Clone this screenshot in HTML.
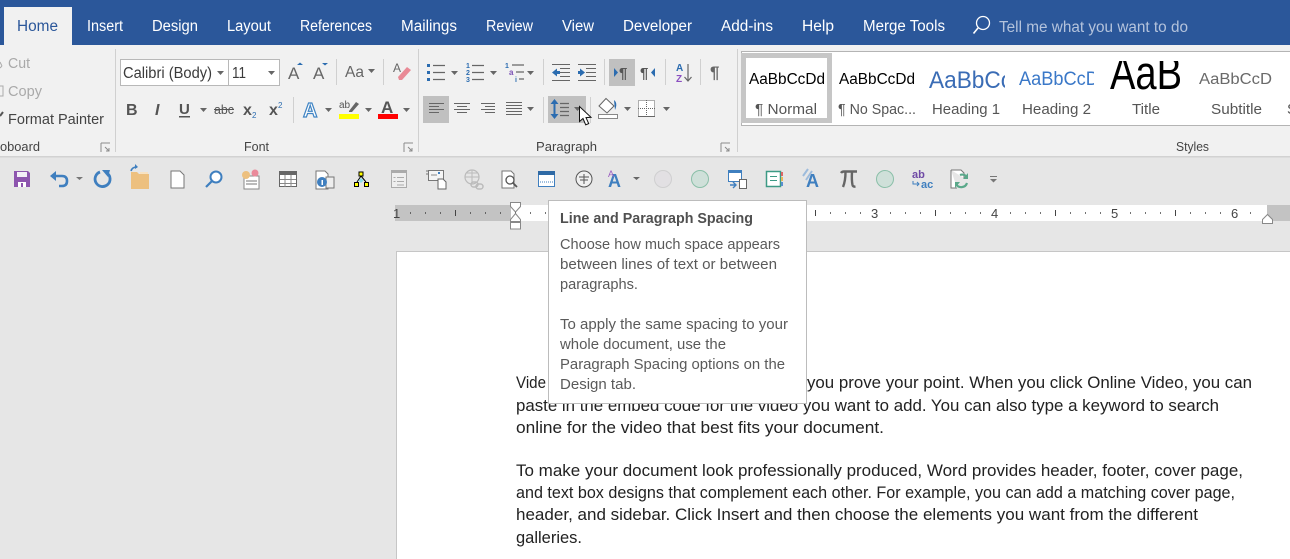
<!DOCTYPE html>
<html><head><meta charset="utf-8"><title>Word</title>
<style>
html,body{margin:0;padding:0;width:1290px;height:559px;overflow:hidden;background:#e6e6e6}
svg{display:block}
text{font-family:"Liberation Sans","DejaVu Sans",sans-serif;font-size:14px;fill:#444}
.tab{font-size:15.5px;fill:#fff}
.rb{font-size:15px;fill:#444}
.lb{font-size:13px;fill:#444}
.tt{font-size:15px;fill:#5a5a5a}
.bd{font-size:16.5px;fill:#222}
.num{font-size:13px;fill:#444}
</style></head><body>
<svg width="1290" height="559" viewBox="0 0 1290 559" xmlns="http://www.w3.org/2000/svg">
<defs>
<clipPath id="c1"><rect x="925" y="58" width="80" height="40"/></clipPath>
<clipPath id="c2"><rect x="1015" y="58" width="79" height="40"/></clipPath>
<clipPath id="c3"><rect x="1100" y="61" width="90" height="40"/></clipPath>
<path id="ar" d="M0 0h7l-3.500 4z" fill="#666"/>
</defs>
<rect width="1290" height="559" fill="#e6e6e6"/>
<!-- title/tab bar -->
<rect width="1290" height="45" fill="#2b579a"/>
<rect y="45" width="1290" height="111" fill="#f1f1f1"/>
<rect y="156" width="1290" height="1.500" fill="#d2d2d2"/>
<rect x="4" y="7" width="68" height="38" fill="#f1f1f1"/>
<text x="17" y="31" class="tab" style="fill:#2b579a" textLength="41" lengthAdjust="spacingAndGlyphs">Home</text>
<text x="87" y="31" class="tab" textLength="36" lengthAdjust="spacingAndGlyphs">Insert</text>
<text x="152" y="31" class="tab" textLength="46" lengthAdjust="spacingAndGlyphs">Design</text>
<text x="227" y="31" class="tab" textLength="44" lengthAdjust="spacingAndGlyphs">Layout</text>
<text x="300" y="31" class="tab" textLength="72" lengthAdjust="spacingAndGlyphs">References</text>
<text x="401" y="31" class="tab" textLength="56" lengthAdjust="spacingAndGlyphs">Mailings</text>
<text x="486" y="31" class="tab" textLength="47" lengthAdjust="spacingAndGlyphs">Review</text>
<text x="562" y="31" class="tab" textLength="32" lengthAdjust="spacingAndGlyphs">View</text>
<text x="623" y="31" class="tab" textLength="69" lengthAdjust="spacingAndGlyphs">Developer</text>
<text x="721" y="31" class="tab" textLength="52" lengthAdjust="spacingAndGlyphs">Add-ins</text>
<text x="802" y="31" class="tab" textLength="32" lengthAdjust="spacingAndGlyphs">Help</text>
<text x="863" y="31" class="tab" textLength="82" lengthAdjust="spacingAndGlyphs">Merge Tools</text>
<circle cx="983" cy="23" r="6.500" fill="none" stroke="#fff" stroke-width="1.300"/>
<path d="M978 28l-4.500 5.500" stroke="#fff" stroke-width="1.600" fill="none"/>
<text x="999" y="32" class="tab" style="fill:#b4c3dc" textLength="189" lengthAdjust="spacingAndGlyphs">Tell me what you want to do</text>

<!-- separators -->
<g fill="#d0d0d0"><rect x="115" y="49" width="1" height="103"/><rect x="418" y="49" width="1" height="103"/><rect x="737" y="49" width="1" height="103"/></g>

<!-- clipboard -->
<path d="M0 62l2 4M0 68l2-2" stroke="#aaa" fill="none"/>
<text x="8" y="68" class="rb" style="fill:#a9a9a9" textLength="22" lengthAdjust="spacingAndGlyphs">Cut</text>
<path d="M0 86h3v10H0" stroke="#aaa" fill="none"/>
<text x="8" y="96" class="rb" style="fill:#a9a9a9" textLength="34" lengthAdjust="spacingAndGlyphs">Copy</text>
<path d="M0 116l3-4" stroke="#555" stroke-width="2" fill="none"/>
<text x="8" y="124" class="rb" textLength="96" lengthAdjust="spacingAndGlyphs">Format Painter</text>
<text x="0" y="151" class="lb" textLength="40" lengthAdjust="spacingAndGlyphs">oboard</text>
<path d="M101 143h9M101 143v9M105 147l4 4M109 148v3h-3" stroke="#8a8a8a" fill="none"/>

<!-- font group -->
<rect x="120.500" y="59.500" width="108" height="26" fill="#fff" stroke="#b8b8b8"/>
<rect x="228.500" y="59.500" width="51" height="26" fill="#fff" stroke="#b8b8b8"/>
<text x="123" y="78" style="font-size:15.500px;fill:#3b3b3b" textLength="89" lengthAdjust="spacingAndGlyphs">Calibri (Body)</text>
<text x="232" y="78" style="font-size:15.500px;fill:#3b3b3b" textLength="14" lengthAdjust="spacingAndGlyphs">11</text>
<use href="#ar" x="217" y="71"/><use href="#ar" x="268" y="71"/>
<text x="288" y="79" style="font-size:17px;fill:#666">A</text><path d="M297 65l3-2.500 3 2.500z" fill="#2b6cb0"/>
<text x="313" y="79" style="font-size:17px;fill:#666">A</text><path d="M322 63h6l-3 2.500z" fill="#2b6cb0"/>
<rect x="336" y="59" width="1" height="26" fill="#d0d0d0"/>
<text x="345" y="77" style="font-size:16px;fill:#666" textLength="19" lengthAdjust="spacingAndGlyphs">Aa</text><use href="#ar" x="368" y="69"/>
<rect x="383" y="59" width="1" height="26" fill="#d0d0d0"/>
<text x="393" y="72" style="font-size:12px;fill:#666">A</text>
<path d="M398 77l9-10 4 3-9 10h-3z" fill="#e98a96"/>

<text x="126" y="115" style="font-size:16px;font-weight:bold;fill:#555">B</text>
<text x="155" y="115" style="font-size:16px;font-style:italic;font-weight:bold;fill:#555">I</text>
<text x="179" y="114" style="font-size:15px;font-weight:bold;fill:#555">U</text><rect x="179" y="116" width="11" height="1.500" fill="#555"/>
<use href="#ar" x="200" y="108"/>
<text x="214" y="114" style="font-size:13px;fill:#555" textLength="20" lengthAdjust="spacingAndGlyphs">abc</text><rect x="214" y="109" width="20" height="1" fill="#555"/>
<text x="243" y="115" style="font-size:16px;font-weight:bold;fill:#555">x</text><text x="252" y="118" style="font-size:8px;fill:#2b6cb0">2</text>
<text x="269" y="115" style="font-size:16px;font-weight:bold;fill:#555">x</text><text x="278" y="108" style="font-size:8px;fill:#2b6cb0">2</text>
<rect x="293" y="97" width="1" height="26" fill="#d0d0d0"/>
<text x="303" y="117" style="font-size:20px;font-weight:bold;fill:#fff;stroke:#3f84c4;stroke-width:1.200">A</text>
<use href="#ar" x="325" y="108"/>
<text x="339" y="108" style="font-size:10px;fill:#555">ab</text>
<path d="M349 111l7-9 3 2-7 8h-3z" fill="#666"/>
<rect x="339" y="114" width="20" height="5" fill="#ff0"/>
<use href="#ar" x="365" y="108"/>
<text x="381" y="113" style="font-size:17px;fill:#555;font-weight:bold">A</text>
<rect x="378" y="114" width="20" height="5" fill="#f00"/>
<use href="#ar" x="403" y="108"/>
<text x="244" y="151" class="lb" textLength="25" lengthAdjust="spacingAndGlyphs">Font</text>
<path d="M404 143h9M404 143v9M408 147l4 4M412 148v3h-3" stroke="#8a8a8a" fill="none"/>

<!-- paragraph -->
<rect x="609" y="59" width="26" height="27" fill="#c0c0c0"/>
<rect x="423" y="96" width="26" height="27" fill="#c0c0c0"/>
<rect x="548" y="96" width="38" height="27" fill="#c0c0c0"/>
<g fill="#d0d0d0"><rect x="543" y="59" width="1" height="26"/><rect x="604" y="59" width="1" height="26"/><rect x="665" y="59" width="1" height="26"/><rect x="700" y="59" width="1" height="26"/><rect x="543" y="97" width="1" height="26"/><rect x="590" y="97" width="1" height="26"/></g>
<!-- bullets -->
<g fill="#2b6cb0"><rect x="427" y="64" width="3" height="3"/><rect x="427" y="71" width="3" height="3"/><rect x="427" y="78" width="3" height="3"/></g>
<path d="M433 65.500h12M433 72.500h12M433 79.500h12" stroke="#666" stroke-width="1.200"/>
<use href="#ar" x="451" y="71"/>
<text x="466" y="68" style="font-size:7px;fill:#2b6cb0;font-weight:bold">1</text><text x="466" y="75" style="font-size:7px;fill:#2b6cb0;font-weight:bold">2</text><text x="466" y="82" style="font-size:7px;fill:#2b6cb0;font-weight:bold">3</text>
<path d="M472 65.500h12M472 72.500h12M472 79.500h12" stroke="#666" stroke-width="1.200"/>
<use href="#ar" x="490" y="71"/>
<text x="505" y="68" style="font-size:7px;fill:#2b6cb0;font-weight:bold">1</text>
<text x="509" y="75" style="font-size:8px;fill:#7a4fb5;font-weight:bold">a</text>
<text x="515" y="82" style="font-size:7px;fill:#2b6cb0;font-weight:bold">i</text>
<path d="M512 65h12M516 72h8M519 79h5" stroke="#666" stroke-width="1.200"/>
<use href="#ar" x="527" y="71"/>
<!-- outdent / indent -->
<path d="M552 64.500h18M560 68.500h10M560 72.500h10M560 76.500h10M552 80.500h18" stroke="#666" stroke-width="1"/>
<path d="M552 72.500l5-4v2.500h3v3h-3v2.500z" fill="#2b6cb0"/>
<path d="M578 64.500h18M586 68.500h10M586 72.500h10M586 76.500h10M578 80.500h18" stroke="#666" stroke-width="1"/>
<path d="M585 72.500l-5-4v2.500h-2v3h2v2.500z" fill="#2b6cb0"/>
<!-- ltr/rtl -->
<path d="M614 68v9l4-4.500z" fill="#2b6cb0"/>
<text x="619" y="78" style="font-size:15px;fill:#555;font-weight:bold">¶</text>
<text x="640" y="78" style="font-size:15px;fill:#555;font-weight:bold">¶</text>
<path d="M655 68v9l-4-4.500z" fill="#2b6cb0"/>
<!-- sort -->
<text x="676" y="71" style="font-size:10px;fill:#2b6cb0;font-weight:bold">A</text>
<text x="676" y="82" style="font-size:10px;fill:#8b4fc0;font-weight:bold">Z</text>
<path d="M688 64v17M684.500 77l3.500 4 3.500-4" stroke="#666" stroke-width="1.200" fill="none"/>
<text x="710" y="78" style="font-size:17px;fill:#666;font-weight:bold">¶</text>
<!-- align -->
<path d="M429 103.500h15M429 106.500h10M429 109.500h15M429 112.500h10" stroke="#666"/>
<path d="M454 103.500h16M457 106.500h10M454 109.500h16M457 112.500h10" stroke="#666"/>
<path d="M481 103.500h14M485 106.500h10M481 109.500h14M485 112.500h10" stroke="#666"/>
<path d="M506 102.500h16M506 105.500h16M506 108.500h16M506 111.500h16M506 114.500h16" stroke="#666"/>
<use href="#ar" x="527" y="107"/>
<!-- line spacing -->
<path d="M554.500 102v14" stroke="#2b6cb0" stroke-width="2"/><path d="M550.500 104l4-5 4 5zM550.500 114l4 5 4-5z" fill="#2b6cb0"/>
<path d="M560 103.500h9M560 107.500h9M560 111.500h9M560 115.500h9" stroke="#666" stroke-width="1.200"/>
<use href="#ar" x="574" y="107"/>
<!-- shading -->
<path d="M599 106l7-7.500 8 7.500-7 7z" fill="#fff" stroke="#666"/><path d="M614 100q4 3 1 10z" fill="#2b6cb0"/>
<rect x="598.500" y="114.500" width="19" height="4" fill="#fff" stroke="#888"/>
<use href="#ar" x="624" y="107"/>
<!-- borders -->
<rect x="638.500" y="100.500" width="16" height="16" fill="#fff" stroke="#666" stroke-dasharray="1 1"/>
<path d="M638 108.500h17M646.500 100v17" stroke="#666" stroke-dasharray="1 1"/>
<path d="M638 116.500h17" stroke="#666"/>
<use href="#ar" x="663" y="107"/>
<!-- cursor -->
<path d="M579.500 106.500v15l3.500-3 2.700 6.300 3-1.200-2.700-6 5-.3z" fill="#fff" stroke="#111" stroke-width="1"/>
<text x="536" y="151" class="lb" textLength="61" lengthAdjust="spacingAndGlyphs">Paragraph</text>
<path d="M721 143h9M721 143v9M725 147l4 4M729 148v3h-3" stroke="#8a8a8a" fill="none"/>

<!-- styles gallery -->
<rect x="741.500" y="51.500" width="560" height="74" fill="#fff" stroke="#b4b4b4"/>
<rect x="743.500" y="55.500" width="86" height="65" fill="#fff" stroke="#c6c6c6" stroke-width="5"/>
<text x="749" y="84" style="font-size:15.500px;fill:#000" textLength="76" lengthAdjust="spacingAndGlyphs">AaBbCcDd</text>
<text x="839" y="84" style="font-size:15.500px;fill:#000" textLength="76" lengthAdjust="spacingAndGlyphs">AaBbCcDd</text>
<g clip-path="url(#c1)"><text x="929" y="88" style="font-size:24px;fill:#3a6cb5" textLength="112" lengthAdjust="spacingAndGlyphs">AaBbCcDd</text></g>
<g clip-path="url(#c2)"><text x="1019" y="85" style="font-size:19px;fill:#3a78c8" textLength="90" lengthAdjust="spacingAndGlyphs">AaBbCcDd</text></g>
<g clip-path="url(#c3)"><text x="1110" y="89" style="font-size:47px;fill:#000" textLength="72" lengthAdjust="spacingAndGlyphs">AaB</text></g>
<text x="1199" y="84" style="font-size:15.500px;fill:#6a6a6a" textLength="73" lengthAdjust="spacingAndGlyphs">AaBbCcD</text>
<text x="755" y="114" class="rb" style="fill:#555" textLength="62" lengthAdjust="spacingAndGlyphs">¶ Normal</text>
<text x="838" y="114" class="rb" style="fill:#555" textLength="78" lengthAdjust="spacingAndGlyphs">¶ No Spac...</text>
<text x="932" y="114" class="rb" style="fill:#555" textLength="68" lengthAdjust="spacingAndGlyphs">Heading 1</text>
<text x="1022" y="114" class="rb" style="fill:#555" textLength="69" lengthAdjust="spacingAndGlyphs">Heading 2</text>
<text x="1132" y="114" class="rb" style="fill:#555" textLength="28" lengthAdjust="spacingAndGlyphs">Title</text>
<text x="1211" y="114" class="rb" style="fill:#555" textLength="51" lengthAdjust="spacingAndGlyphs">Subtitle</text>
<text x="1287" y="114" class="rb" style="fill:#555">S</text>
<text x="1176" y="151" class="lb" textLength="33" lengthAdjust="spacingAndGlyphs">Styles</text>

<!-- QAT -->
<!-- save -->
<path d="M14 171h14l2 2v14H14z" fill="#8d55ae"/><rect x="17" y="172" width="10" height="5" fill="#f3eef7"/><rect x="18" y="182" width="8" height="5" fill="#fff"/><rect x="21" y="183" width="2" height="4" fill="#8d55ae"/>
<!-- undo -->
<path d="M53 176h9q5 0 5 5t-5 5h-3" fill="none" stroke="#3f7fbf" stroke-width="2.600"/><path d="M56 171l-6 5 6 5z" fill="#3f7fbf"/>
<path d="M76 177h7l-3.500 3z" fill="#777"/>
<!-- redo -->
<path d="M100 172a7.500 7.500 0 1 0 7 1" fill="none" stroke="#3f7fbf" stroke-width="2.800"/><path d="M102 170h8l-2 7z" fill="#3f7fbf"/>
<!-- open -->
<path d="M131 172h6l2 2h10v15h-18z" fill="#edc07f"/><path d="M131 171q1-4 6-4" fill="none" stroke="#3f7fbf" stroke-width="1.600"/><path d="M135 164l3 3-3 2z" fill="#3f7fbf"/><rect x="140" y="172" width="8" height="2" fill="#f7e2c2"/>
<!-- new -->
<path d="M171 171h9l4 4v13h-13z" fill="#fff" stroke="#777"/>
<!-- find -->
<circle cx="216" cy="177" r="5.500" fill="#fff" stroke="#3f7fbf" stroke-width="2"/><path d="M212 181l-6 6" stroke="#3f7fbf" stroke-width="2.200"/>
<!-- icon 251 -->
<rect x="244" y="176" width="15" height="13" fill="#fff" stroke="#888"/><path d="M246 181h11M246 184h11" stroke="#777"/><circle cx="246" cy="175" r="4" fill="#edc07f"/><circle cx="255" cy="173" r="3.500" fill="#ea8a9b"/>
<!-- table -->
<rect x="279.500" y="171.500" width="17" height="15" fill="#fff" stroke="#666"/><rect x="279" y="171" width="18" height="4" fill="#666"/><path d="M285 175v12M291 175v12M280 179.500h16M280 183.500h16" stroke="#888"/>
<!-- 325 -->
<path d="M316 171h9l3 3v15h-12z" fill="#fff" stroke="#777"/><rect x="326" y="177" width="8" height="11" fill="#eee" stroke="#777"/><circle cx="322" cy="182" r="5" fill="#3f7fbf"/><rect x="321.500" y="180" width="1.500" height="5" fill="#fff"/>
<!-- 361 -->
<rect x="359" y="172" width="4" height="4" fill="#ff0" stroke="#000"/><rect x="354.500" y="182.500" width="4" height="4" fill="#ff0" stroke="#000"/><rect x="364.500" y="182.500" width="4" height="4" fill="#ff0" stroke="#000"/><path d="M361 176l-4 6M361 176l5 6" stroke="#000"/><path d="M361 178l2.500 2.500-2.500 2.500-2.500-2.500z" fill="#8de"/>
<!-- 398 -->
<rect x="391.500" y="170.500" width="15" height="17" fill="#eee" stroke="#aaa"/><rect x="391" y="170" width="16" height="3" fill="#aaa"/><path d="M397 177.500h7M397 181.500h7M397 185h7M393.500 177.500h2M393.500 181.500h2" stroke="#aaa"/>
<!-- 436 -->
<rect x="428.500" y="170.500" width="15" height="10" fill="#f5f5f5" stroke="#777"/><rect x="438" y="172" width="2" height="2" fill="#3f7fbf"/><path d="M431 175h6" stroke="#888"/><path d="M438 179h5l3 3v7h-8z" fill="#fff" stroke="#666"/><path d="M426 171h2M426 174h2" stroke="#777"/>
<!-- 473 globe -->
<circle cx="472" cy="177" r="7" fill="none" stroke="#bbb" stroke-width="1.200"/><path d="M465 177h14M472 170v14M467 173h10" stroke="#bbb"/><rect x="471" y="182" width="7" height="5" rx="2.500" fill="none" stroke="#bbb" stroke-width="1.500"/><rect x="476" y="184" width="7" height="5" rx="2.500" fill="none" stroke="#bbb" stroke-width="1.500"/>
<!-- 510 -->
<path d="M502 171h9l3 3v14h-12z" fill="#fff" stroke="#777"/><circle cx="510" cy="180" r="4" fill="#fff" stroke="#555" stroke-width="1.300"/><path d="M513 183l4 4" stroke="#555" stroke-width="1.800"/>
<!-- 546 -->
<rect x="538.500" y="171.500" width="16" height="15" fill="#fff" stroke="#3f7fbf"/><rect x="538" y="171" width="17" height="4" fill="#2f6aa5"/><path d="M540 182h13" stroke="#3f7fbf" stroke-dasharray="1 1"/>
<!-- 584 -->
<circle cx="584" cy="179" r="8" fill="#f0f0f0" stroke="#555"/><path d="M579 177h10M584 174v10M580 180h8" stroke="#555"/>
<!-- A 615 -->
<text x="608" y="187" style="font-size:18px;font-weight:bold;fill:#3f7fbf">A</text><text x="608" y="177" style="font-size:9px;fill:#9a5cc0">A</text>
<path d="M633 177h7l-3.500 3z" fill="#666"/>
<circle cx="663" cy="179" r="8.500" fill="#e2e0e3" stroke="#cfcfd0"/>
<circle cx="700" cy="179" r="8.500" fill="#cfe0d9" stroke="#8abfa8"/>
<!-- 737 -->
<rect x="728.500" y="170.500" width="13" height="11" fill="#fff" stroke="#3f7fbf"/><rect x="728" y="170" width="14" height="3" fill="#3f7fbf"/><rect x="739.500" y="179.500" width="7" height="9" fill="#fff" stroke="#666"/><path d="M730 185h6M733 182l3 3-3 3" fill="none" stroke="#3f7fbf" stroke-width="1.400"/>
<!-- 774 -->
<rect x="766.500" y="171.500" width="14" height="15" fill="#fff" stroke="#3d9a85" stroke-width="1.500"/><path d="M770 176.500h7M770 180.500h7" stroke="#3d9a85"/><rect x="781" y="172" width="2" height="4" fill="#d66"/><rect x="781" y="177" width="2" height="4" fill="#e7b85a"/><rect x="781" y="182" width="2" height="4" fill="#5a8ed0"/>
<!-- 810 -->
<text x="806" y="187" style="font-size:18px;font-weight:bold;fill:#3f7fbf">A</text><path d="M803 176l5-7M806 180l6-9" stroke="#9dbbdc" stroke-width="2"/>
<!-- pi -->
<path d="M841 173q1-1.500 3-1.500h13M845.500 172q0 9-2.500 15M852 172q-.5 8 .5 13q.5 2 3 1.500" fill="none" stroke="#666" stroke-width="2.400"/>
<circle cx="885" cy="179" r="8.500" fill="#cfe0d9" stroke="#8abfa8"/>
<!-- ab ac -->
<text x="912" y="178" style="font-size:11px;font-weight:bold;fill:#6f4aa5">ab</text>
<text x="921" y="188" style="font-size:11px;font-weight:bold;fill:#3f7fbf">ac</text>
<path d="M913 181v3h6M917 182l2 2-2 2" fill="none" stroke="#3f7fbf"/>
<!-- refresh -->
<path d="M951 170h10l3 3v5M951 170v18h6" fill="#fff" stroke="#777"/>
<path d="M960 175a6 6 0 0 1 7 2M967 183a6 6 0 0 1-11 1" fill="none" stroke="#5aa88a" stroke-width="2.200"/><path d="M968 173v6h-5zM955 188v-6h5z" fill="#5aa88a"/>
<path d="M990 176.500h7" stroke="#777"/><path d="M990 179h7l-3.500 3.500z" fill="#777"/>

<!-- ruler -->
<rect x="395" y="205" width="895" height="16" fill="#fff"/>
<rect x="395" y="205" width="116" height="16" fill="#c3c3c3"/>
<rect x="1267" y="205" width="23" height="16" fill="#c3c3c3"/>
<line x1="410" y1="213" x2="1262" y2="213" stroke="#444" stroke-width="1.500" stroke-dasharray="1 14"/>
<rect x="868" y="206" width="14" height="14" fill="#fff"/><rect x="988" y="206" width="14" height="14" fill="#fff"/><rect x="1108" y="206" width="14" height="14" fill="#fff"/><rect x="1228" y="206" width="14" height="14" fill="#fff"/>
<path d="M455.500 210v6M815.500 210v6M935.500 210v6M1055.500 210v6M1175.500 210v6" stroke="#444"/>
<text x="393" y="218" class="num">1</text><text x="871" y="218" class="num">3</text><text x="991" y="218" class="num">4</text><text x="1111" y="218" class="num">5</text><text x="1231" y="218" class="num">6</text>
<path d="M510.500 202.500h10v4l-5 5.500-5-5.500z" fill="#fff" stroke="#888"/>
<path d="M515.500 213.500l5 6v2h-10v-2z" fill="#fff" stroke="#888"/>
<rect x="510.500" y="222.500" width="10" height="6.500" fill="#fff" stroke="#888"/>
<path d="M1262.500 223.500v-4l5-5 5 5v4z" fill="#fff" stroke="#888"/>

<!-- page -->
<rect x="396.500" y="251.500" width="900" height="320" fill="#fff" stroke="#c6c6c6"/>
<text x="516" y="388" class="bd" textLength="30" lengthAdjust="spacingAndGlyphs">Vide</text>
<text x="807" y="388" class="bd" textLength="445" lengthAdjust="spacingAndGlyphs">you prove your point. When you click Online Video, you can</text>
<text x="516" y="411" class="bd" textLength="703" lengthAdjust="spacingAndGlyphs">paste in the embed code for the video you want to add. You can also type a keyword to search</text>
<text x="516" y="433" class="bd" textLength="368" lengthAdjust="spacingAndGlyphs">online for the video that best fits your document.</text>
<text x="516" y="476" class="bd" textLength="727" lengthAdjust="spacingAndGlyphs">To make your document look professionally produced, Word provides header, footer, cover page,</text>
<text x="516" y="498" class="bd" textLength="719" lengthAdjust="spacingAndGlyphs">and text box designs that complement each other. For example, you can add a matching cover page,</text>
<text x="516" y="520" class="bd" textLength="682" lengthAdjust="spacingAndGlyphs">header, and sidebar. Click Insert and then choose the elements you want from the different</text>
<text x="516" y="543" class="bd" textLength="66" lengthAdjust="spacingAndGlyphs">galleries.</text>

<!-- tooltip -->
<rect x="548.500" y="200.500" width="258" height="203" fill="#fff" stroke="#bcbcbc"/>
<text x="560" y="223" class="tt" style="font-weight:bold;fill:#505050" textLength="193" lengthAdjust="spacingAndGlyphs">Line and Paragraph Spacing</text>
<text x="560" y="249" class="tt" textLength="220" lengthAdjust="spacingAndGlyphs">Choose how much space appears</text>
<text x="560" y="269" class="tt" textLength="217" lengthAdjust="spacingAndGlyphs">between lines of text or between</text>
<text x="560" y="289" class="tt" textLength="78" lengthAdjust="spacingAndGlyphs">paragraphs.</text>
<text x="560" y="329" class="tt" textLength="228" lengthAdjust="spacingAndGlyphs">To apply the same spacing to your</text>
<text x="560" y="349" class="tt" textLength="166" lengthAdjust="spacingAndGlyphs">whole document, use the</text>
<text x="560" y="369" class="tt" textLength="225" lengthAdjust="spacingAndGlyphs">Paragraph Spacing options on the</text>
<text x="560" y="389" class="tt" textLength="76" lengthAdjust="spacingAndGlyphs">Design tab.</text>
</svg>
</body></html>
